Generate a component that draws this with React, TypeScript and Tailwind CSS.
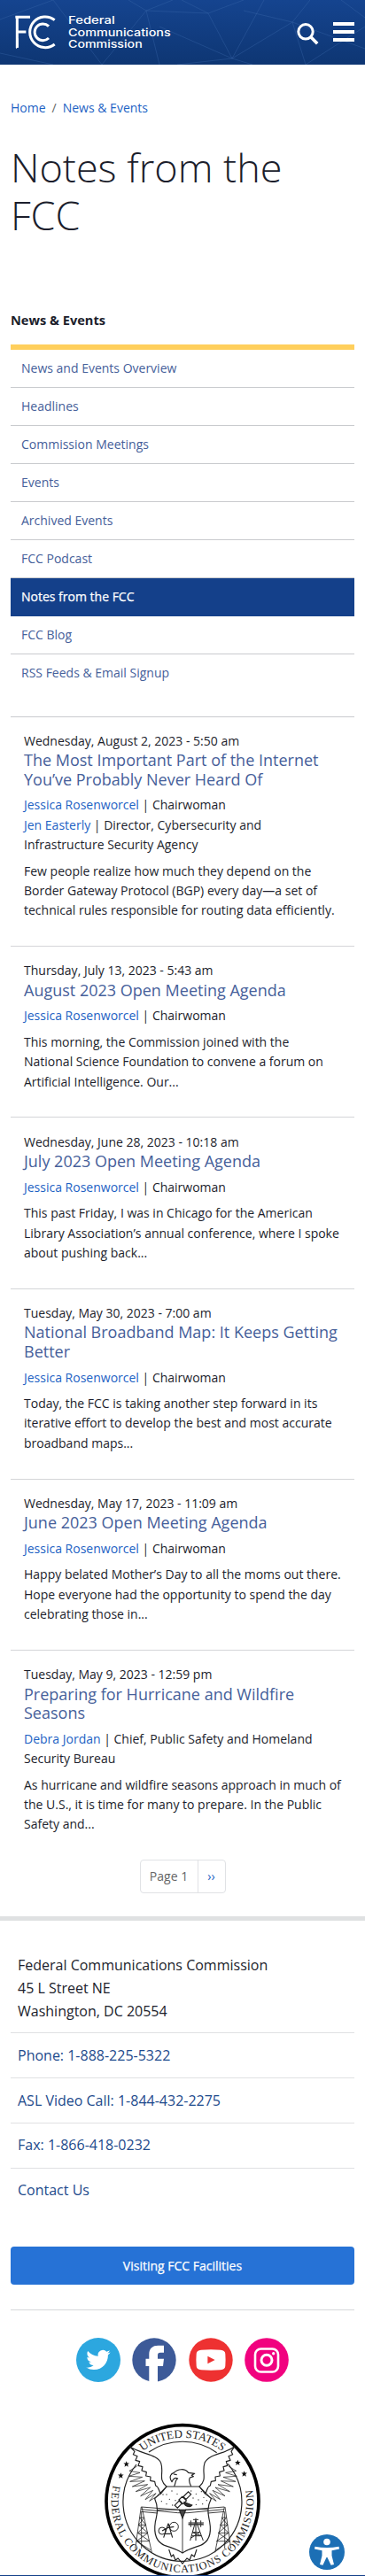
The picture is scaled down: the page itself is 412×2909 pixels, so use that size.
import React from "react";

type Author = { name: string; role: string };
type Post = { date: string; title: string; authors: Author[]; body: string };

const chair: Author = { name: "Jessica Rosenworcel", role: "Chairwoman" };

const posts: Post[] = [
  {
    date: "Wednesday, August 2, 2023 - 5:50 am",
    title: "The Most Important Part of the Internet You’ve Probably Never Heard Of",
    authors: [chair, { name: "Jen Easterly", role: "Director, Cybersecurity and Infrastructure Security Agency" }],
    body: "Few people realize how much they depend on the Border Gateway Protocol (BGP) every day—a set of technical rules responsible for routing data efficiently.",
  },
  {
    date: "Thursday, July 13, 2023 - 5:43 am",
    title: "August 2023 Open Meeting Agenda",
    authors: [chair],
    body: "This morning, the Commission joined with the National Science Foundation to convene a forum on Artificial Intelligence. Our...",
  },
  {
    date: "Wednesday, June 28, 2023 - 10:18 am",
    title: "July 2023 Open Meeting Agenda",
    authors: [chair],
    body: "This past Friday, I was in Chicago for the American Library Association’s annual conference, where I spoke about pushing back...",
  },
  {
    date: "Tuesday, May 30, 2023 - 7:00 am",
    title: "National Broadband Map: It Keeps Getting Better",
    authors: [chair],
    body: "Today, the FCC is taking another step forward in its iterative effort to develop the best and most accurate broadband maps...",
  },
  {
    date: "Wednesday, May 17, 2023 - 11:09 am",
    title: "June 2023 Open Meeting Agenda",
    authors: [chair],
    body: "Happy belated Mother’s Day to all the moms out there. Hope everyone had the opportunity to spend the day celebrating those in...",
  },
  {
    date: "Tuesday, May 9, 2023 - 12:59 pm",
    title: "Preparing for Hurricane and Wildfire Seasons",
    authors: [{ name: "Debra Jordan", role: "Chief, Public Safety and Homeland Security Bureau" }],
    body: "As hurricane and wildfire seasons approach in much of the U.S., it is time for many to prepare. In the Public Safety and...",
  },
];

const menu = [
  "News and Events Overview",
  "Headlines",
  "Commission Meetings",
  "Events",
  "Archived Events",
  "FCC Podcast",
  "Notes from the FCC",
  "FCC Blog",
  "RSS Feeds & Email Signup",
];

const contacts = ["Phone: 1-888-225-5322", "ASL Video Call: 1-844-432-2275", "Fax: 1-866-418-0232", "Contact Us"];

function Header() {
  return (
    <header className="relative h-[73px] overflow-hidden bg-linear-to-b from-[#15448f] to-[#0e3673]">
      <svg className="absolute inset-0" width="412" height="73" viewBox="0 0 412 73" fill="none" stroke="#3f6db0" strokeOpacity=".35" strokeWidth="1">
        <path d="M0 22L60 0M60 0L115 73M115 73L165 12L195 0M165 12L145 0M165 12L180 73M165 12L235 15L205 0M235 15L262 66L180 30M235 15L275 0M262 66L298 0M262 66L330 25L350 0M262 66L200 73M262 66L285 73M330 25L345 73M330 25L275 12M345 73L412 30M330 25L412 55M385 0L412 20M0 60L60 73" />
      </svg>
      <div className="relative flex h-full items-start justify-between pl-[17px] pr-3">
        <svg className="mt-[17px]" width="180" height="40" viewBox="51 51 540 120" role="img" aria-label="Federal Communications Commission">
          <g fill="none" stroke="#fff" strokeWidth="9">
            <path d="M52 58H102M58 54V162M58 108H88" />
            <path d="M185 68A52 52 0 1 0 185 150" />
            <path d="M165 89A28 28 0 1 0 165 129" />
          </g>
          <path d="M54 130V166L62 158V130Z" fill="#fff" />
          <g fill="#fff" fontFamily="Inter, sans-serif" fontWeight="500" fontSize="34">
            <text x="231" y="82" textLength="158" lengthAdjust="spacingAndGlyphs">Federal</text>
            <text x="231" y="122" textLength="347" lengthAdjust="spacingAndGlyphs">Communications</text>
            <text x="231" y="163" textLength="251" lengthAdjust="spacingAndGlyphs">Commission</text>
          </g>
        </svg>
        <div className="flex items-start gap-4 pt-[25px]">
          <svg className="mt-[1px]" width="25" height="25" viewBox="0 0 25 25" fill="none" stroke="#fff">
            <circle cx="10" cy="9.8" r="8.2" strokeWidth="3" />
            <path d="M15.8 15.8L23.2 23.2" strokeWidth="3.6" />
          </svg>
          <div className="flex flex-col gap-[5px]">
            <span className="h-1 w-6 bg-white" />
            <span className="h-1 w-6 bg-white" />
            <span className="h-1 w-6 bg-white" />
          </div>
        </div>
      </div>
    </header>
  );
}

function SideMenu() {
  return (
    <nav className="border-b border-[#c9cbce] pb-[27px]">
      <h2 className="h-[44px] text-[14.6px] leading-8 font-bold">News &amp; Events</h2>
      <ul className="border-t-6 border-[#ffcf5c]">
        {menu.map((m, i) => (
          <li
            key={m}
            className={
              m === "Notes from the FCC"
                ? "h-[43px] bg-[#14408a] px-3 text-sm leading-[42px] text-white [-webkit-text-stroke:0.25px_white]"
                : i === menu.length - 1
                  ? "h-[43px] px-3 text-sm leading-[42px] text-[#46609a]"
                  : "h-[43px] border-b border-[#c9cbce] px-3 text-sm leading-[42px] text-[#46609a]"
            }
          >
            {m}
          </li>
        ))}
      </ul>
    </nav>
  );
}

function PostItem({ post, first, last }: { post: Post; first: boolean; last: boolean }) {
  return (
    <article
      className={
        last
          ? "px-[15px] pt-[16.4px]"
          : first
            ? "border-b border-[#d4d5d8] px-[15px] pt-[15.7px] pb-[28.3px]"
            : "border-b border-[#d4d5d8] px-[15px] pt-[16.4px] pb-[28.3px]"
      }
    >
      <p className="text-sm leading-[22.4px]">{post.date}</p>
      <h3 className="mb-[7px] text-[18px] leading-[21.6px] text-[#46609a]">{post.title}</h3>
      <div className="mb-[7px] text-sm leading-[22.4px]">
        {post.authors.map((a) => (
          <p key={a.name}>
            <a className="text-[#1d62c4]">{a.name}</a> | {a.role}
          </p>
        ))}
      </div>
      <p className="text-sm leading-[22.4px]">{post.body}</p>
    </article>
  );
}

const dots = [
  [262, 352], [280, 340], [298, 350], [272, 368], [292, 372], [262, 384], [282, 388], [245, 375],
  [345, 340], [362, 350], [380, 342], [352, 364], [370, 370], [388, 362], [362, 386], [384, 384], [398, 372], [250, 352],
];

const stars = [[126, 249], [107, 288], [503, 244], [525, 282]];

function Seal() {
  return (
    <svg width="178" height="176" viewBox="49 109 534 528" fill="none" stroke="#222" strokeWidth="3.5" role="img" aria-label="Federal Communications Commission seal">
      <defs>
        <path id="sealTop" d="M121.4 280A217 217 0 0 1 510.6 280" />
        <path id="sealBottom" d="M82.5 315A241 241 0 1 0 549.5 315" />
      </defs>
      <circle cx="316" cy="375" r="258" stroke="#000" strokeWidth="11" />
      <path d="M202 208A201 201 0 0 1 432 210M470 248A201 201 0 1 1 160 250" />
      <g fill="#222" stroke="none" fontFamily="Liberation Serif, serif" fontSize="39">
        <text textAnchor="middle">
          <textPath href="#sealTop" startOffset="50%" textLength="290" lengthAdjust="spacing">UNITED STATES</textPath>
        </text>
        <text fontSize="37">
          <textPath href="#sealBottom" startOffset="6" textLength="850" lengthAdjust="spacing">FEDERAL COMMUNICATIONS COMMISSION</textPath>
        </text>
      </g>
      {stars.map(([x, y]) => (
        <path key={x} transform={`translate(${x} ${y}) scale(.9)`} fill="#111" stroke="none" d="M0-11L3-3.5L11-3.5L5 1.5L7 10L0 5L-7 10L-5 1.5L-11-3.5L-3-3.5Z" />
      ))}
      <g strokeLinejoin="round">
        <path d="M138 190C175 215 232 215 243 245C254 278 232 300 262 325L242 350C234 335 236 325 225 322L222 308L207 305L208 292L192 289L194 276L178 271L181 258L166 254L171 240L157 236L163 222L149 216L154 206Z" />
        <path d="M492 190C457 215 403 215 391 245C380 278 402 300 373 325L393 350C401 335 399 325 410 322L413 308L428 305L427 292L443 289L441 276L457 271L454 258L468 254L464 240L478 236L472 222L486 216L481 206Z" />
        <path d="M162 256L136 272L172 278L134 290L180 293L138 308L188 306L146 325L198 318L158 342L207 328L174 357L216 338L190 369L226 348L204 374L240 352" strokeWidth="2.2" />
        <path d="M472 256L498 272L462 278L500 290L454 293L496 308L446 306L488 325L436 318L476 342L427 328L460 357L418 338L444 369L408 348L430 374L394 352" strokeWidth="2.2" />
        <path d="M288 324C294 310 292 300 300 298C290 293 284 299 280 309C270 296 274 282 287 278C300 264 325 263 336 278L357 281L347 287L353 291L341 295C336 305 340 315 345 324" />
        <path d="M286 283L297 285" />
      </g>
      <path d="M262 325H373L413 366C398 395 402 415 408 445C416 490 400 515 375 525C350 533 330 540 316 550C302 540 282 533 257 525C232 515 217 490 224 445C231 415 235 395 222 366Z" />
      <path d="M231 404Q280 403 307 404L316 412L325 404Q370 400 403 402M176 394L307 404M176 402L300 414H316M458 394L325 404M458 402L334 414H316M176 410L232 415M458 410L402 415M316 410V550" strokeWidth="2.6" />
      <path d="M305 404L316 432L327 404Z" fill="#444" />
      {dots.map(([x, y]) => (
        <circle key={`${x}-${y}`} cx={x} cy={y} r="2" fill="#333" stroke="none" />
      ))}
      <g transform="rotate(-45 318 370)">
        <path d="M285 363H306V376H285ZM326 363H350V376H326ZM308 360H324V380H308Z" strokeWidth="3.5" />
      </g>
      <path d="M322 378A15 15 0 0 0 348 388Z" fill="#333" />
      <g strokeWidth="2.4">
        <path d="M176 394L156 535M178 394L212 548M177 410V535M171 430H187M167 455H192M164 482H199M160 510H205M171 430L192 455L164 482L205 510M187 430L167 455L199 482L160 510L208 540" />
        <path d="M460 394L480 535M458 394L426 548M459 410V535M465 430H449M469 455H444M472 482H437M476 510H431M465 430L444 455L472 482L431 510M449 430L469 455L437 482L476 510L428 540" />
        <circle cx="247" cy="475" r="12" strokeWidth="3" />
        <circle cx="287" cy="461" r="15" strokeWidth="3" />
        <path d="M247 475L265 465L287 461M268 450L282 498M268 450L252 498M258 485H276" strokeWidth="3.5" />
        <path d="M361 440L342 508M361 440L386 508M350 480H374M347 492H379M350 480L379 492M374 480L344 500M336 452H386M344 440V462M378 440V462M361 432V508M352 437H370" strokeWidth="3" />
      </g>
      <path d="M336 445H388V457H336Z" fill="#444" stroke="none" opacity=".6" />
      <path d="M270 538L278 562L285 556L292 574L301 568L316 586L331 568L340 574L347 556L356 562L364 538" />
    </svg>
  );
}

function SocialIcons() {
  return (
    <div className="flex justify-center gap-[13.3px] pt-[31px]">
      <svg width="50" height="50" viewBox="0 0 50 50" aria-label="Twitter">
        <circle cx="25" cy="25" r="25" fill="#2ca7df" />
        <path transform="translate(11.3 11.3) scale(1.14)" fill="#fff" d="M23.953 4.57a10 10 0 01-2.825.775 4.958 4.958 0 002.163-2.723c-.951.555-2.005.959-3.127 1.184a4.92 4.92 0 00-8.384 4.482C7.69 8.095 4.067 6.13 1.64 3.162a4.822 4.822 0 00-.666 2.475c0 1.71.87 3.213 2.188 4.096a4.904 4.904 0 01-2.228-.616v.06a4.923 4.923 0 003.946 4.827 4.996 4.996 0 01-2.212.085 4.936 4.936 0 004.604 3.417 9.867 9.867 0 01-6.102 2.105c-.39 0-.779-.023-1.17-.067a13.995 13.995 0 007.557 2.209c9.053 0 13.998-7.496 13.998-13.985 0-.21 0-.42-.015-.63A9.935 9.935 0 0024 4.59z" />
      </svg>
      <svg width="50" height="50" viewBox="0 0 50 50" aria-label="Facebook">
        <circle cx="25" cy="25" r="24.7" fill="#3d5a98" />
        <path fill="#fff" d="M19.3 50V32H15.5V23.7H19.3V18.5C19.3 12 23.2 8.7 29.5 8.7H36V16.7H32C29.8 16.7 29 17.8 29 19.8V23.7H36L35 32H29V50Z" />
      </svg>
      <svg width="50" height="50" viewBox="0 0 50 50" aria-label="YouTube">
        <circle cx="25" cy="25" r="24.7" fill="#ee3131" />
        <path fill="#fff" d="M14 13.8Q25 12.9 36 13.8Q41 14.2 41.3 18Q41.9 25 41.3 32Q41 35.8 36 36.2Q25 37.1 14 36.2Q9 35.8 8.7 32Q8.1 25 8.7 18Q9 14.2 14 13.8Z" />
        <path fill="#ee3131" d="M21.4 20.8L29.6 25L21.4 29.3Z" />
      </svg>
      <svg width="50" height="50" viewBox="0 0 50 50" aria-label="Instagram">
        <circle cx="25" cy="25" r="24.8" fill="#f1027f" />
        <rect x="12" y="12.5" width="26" height="26" rx="6.5" fill="none" stroke="#fff" strokeWidth="2.6" />
        <circle cx="25" cy="25.3" r="6" fill="none" stroke="#fff" strokeWidth="3" />
        <circle cx="32.7" cy="17.8" r="1.7" fill="#fff" />
      </svg>
    </div>
  );
}

export default function App() {
  return (
    <div className="relative h-[2909px] w-[412px] overflow-hidden bg-white text-[#1c1e2c] [font-family:'Open_Sans',sans-serif]">
      <Header />
      <main className="px-3">
        <div className="flex pt-[38px] text-sm leading-[22px] text-[#1d62c4]">
          <a>Home</a>
          <span className="px-[7px] text-[#666]">/</span>
          <a>News &amp; Events</a>
        </div>
        <h1 className="mt-[29px] mb-[69px] h-[114px] text-[45px] leading-[54px] font-light">Notes from the FCC</h1>
        <SideMenu />
        {posts.map((p, i) => (
          <PostItem key={p.date} post={p} first={i === 0} last={i === posts.length - 1} />
        ))}
        <div className="mt-[28.5px] flex justify-center">
          <div className="flex h-[38px] rounded-sm border border-[#e0e2e5] text-sm leading-9">
            <span className="w-[65px] border-r border-[#e0e2e5] text-center text-[#666]">Page 1</span>
            <span className="w-[30px] text-center text-[#1d62c4]">››</span>
          </div>
        </div>
      </main>
      <footer className="mt-[25.8px] border-t-5 border-[#dfe1e2] px-3">
        <address className="px-2 pt-[38.2px] pb-[11.2px] text-base leading-[25.6px] not-italic">
          Federal Communications Commission
          <br />
          45 L Street NE
          <br />
          Washington, DC 20554
        </address>
        {contacts.map((c) => (
          <div key={c} className="border-t border-[#e0e1e3] px-2 pt-[12.6px] pb-[11.6px] text-base leading-[25.6px] text-[#1d4a8c]">
            {c}
          </div>
        ))}
        <button className="mt-[39px] block h-[42.4px] w-full rounded bg-[#2672d6] text-sm text-white [-webkit-text-stroke:0.25px_white]">Visiting FCC Facilities</button>
        <div className="mt-[28px] border-t border-[#d5d8da]">
          <SocialIcons />
        </div>
        <div className="flex justify-center pt-[46.2px] pr-[1px]">
          <Seal />
        </div>
      </footer>
      <svg className="absolute top-[2862px] left-[349px]" width="40" height="40" viewBox="0 0 40 40" aria-label="Accessibility">
        <circle cx="20" cy="20" r="20" fill="#1c6fb5" />
        <circle cx="20" cy="8.5" r="3.8" fill="#fff" />
        <path fill="#fff" d="M6.5 13.8Q20 16.2 33.5 13.8L34 16.4L25.5 18.3V24L28 34L24.6 34.8L20.5 26H19.5L15.4 34.8L12 34L14.5 24V18.3L6 16.4Z" />
      </svg>
      <div className="absolute bottom-0 left-0 h-px w-full bg-[#14408a]" />
    </div>
  );
}
